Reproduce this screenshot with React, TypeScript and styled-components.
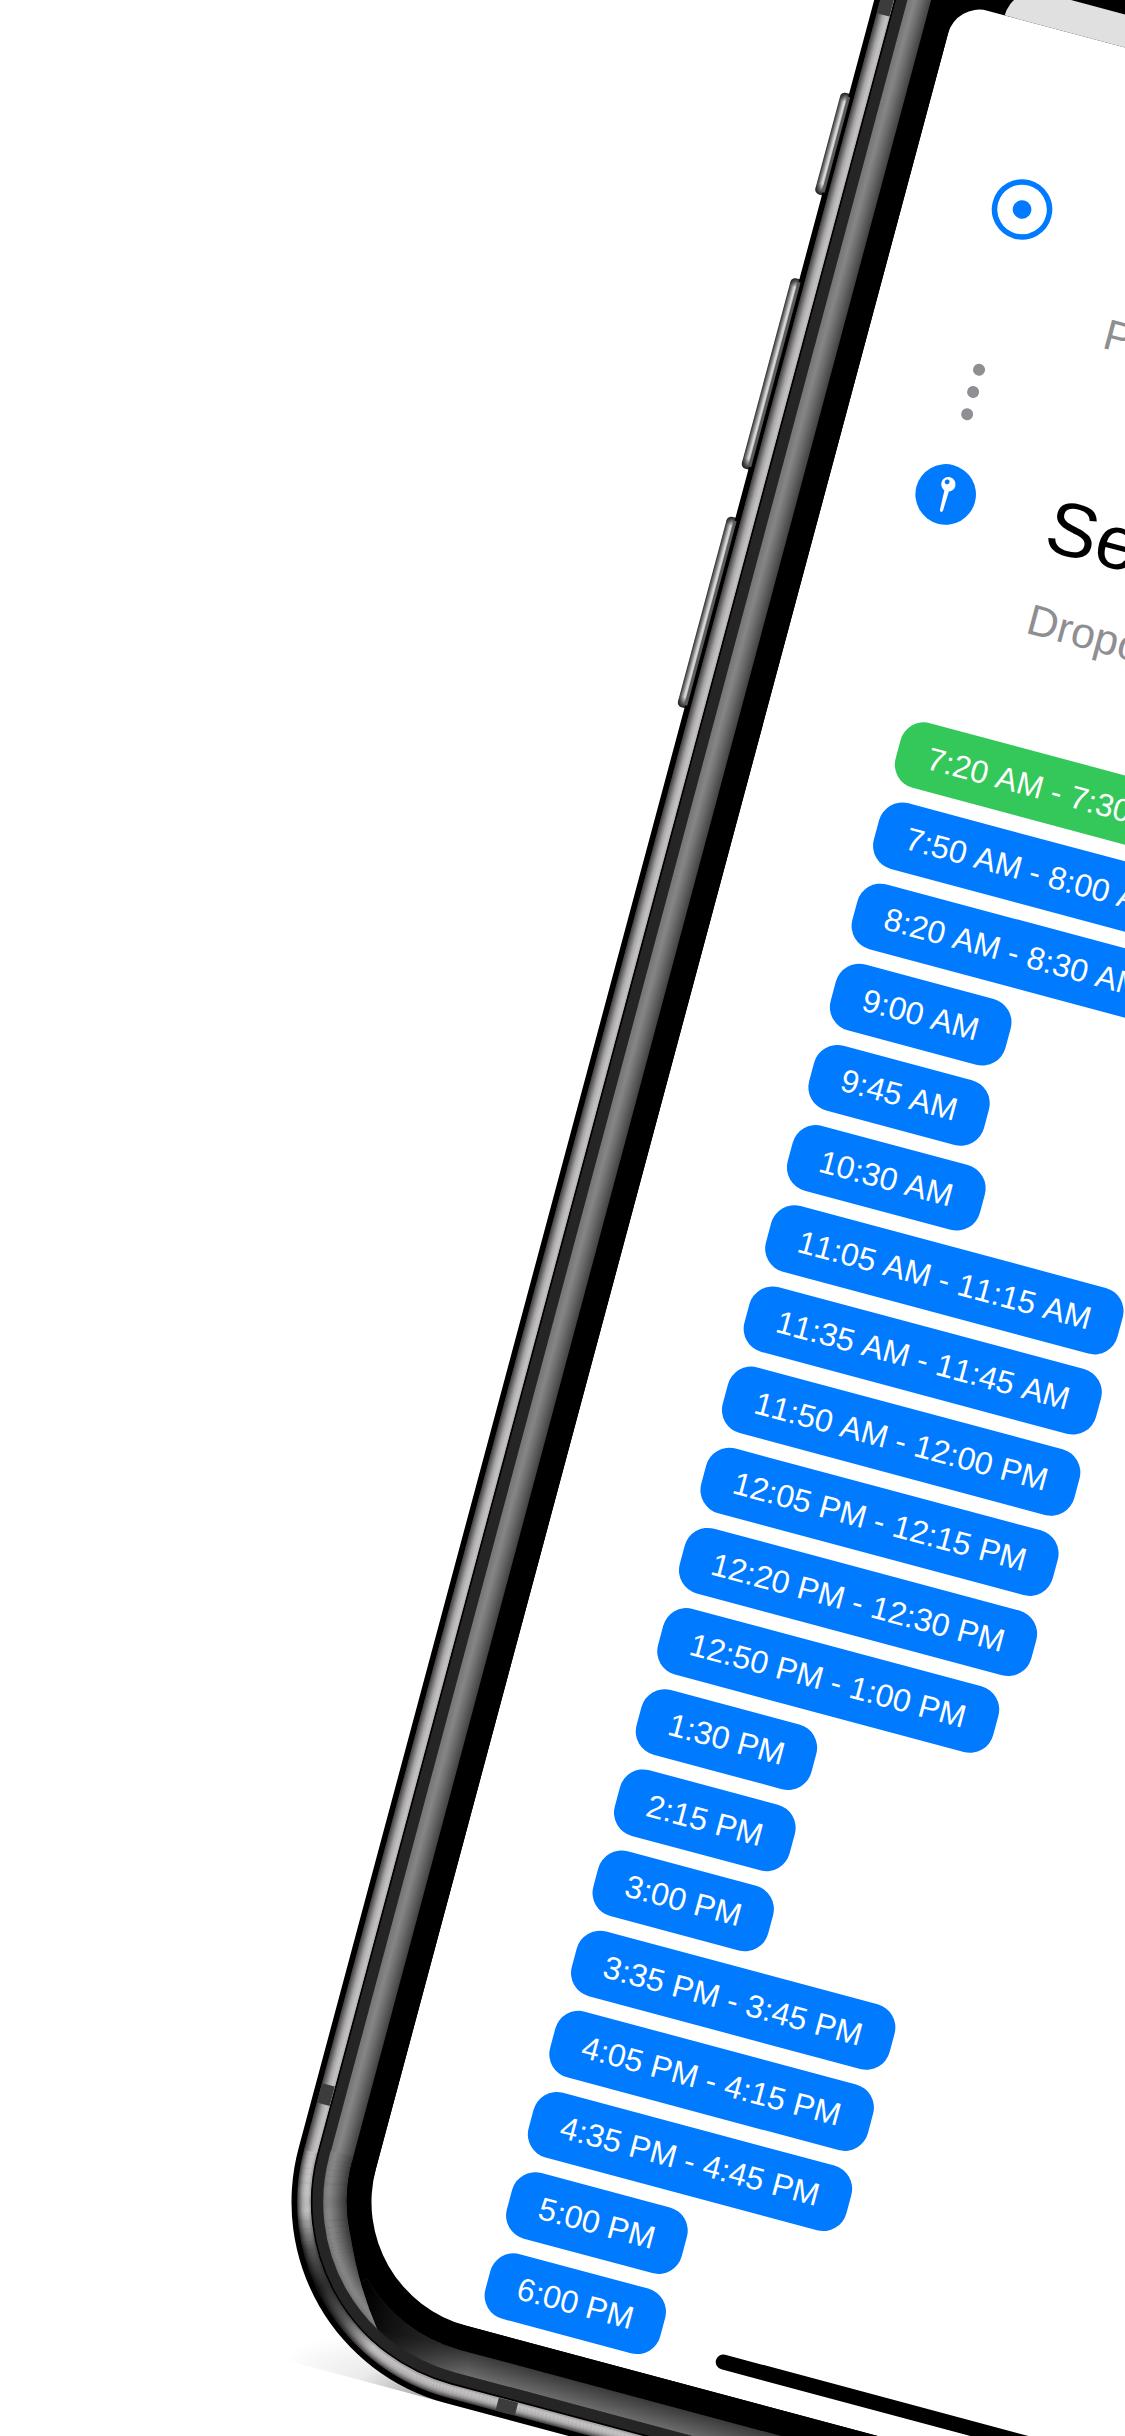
import React from "react";
import styled, { createGlobalStyle } from "styled-components";

const GlobalStyle = createGlobalStyle`
  *, *::before, *::after { box-sizing: border-box; }
  body {
    margin: 0;
    background: #ffffff;
    font-family: "Liberation Sans", Arial, Helvetica, sans-serif;
    font-kerning: none;
  }
`;

const Stage = styled.main`
  height: 100vh;
  overflow: hidden;
  background: #ffffff;
`;

const Device = styled.div`
  position: relative;
  width: 1330px;
  height: 2694px;
  margin: -253px 0 0 942px;
  padding: 80px;
  transform: rotate(15deg);
  transform-origin: top left;
`;

const ShellArt = styled.svg`
  position: absolute;
  inset: 0;
  width: 100%;
  height: 100%;
  overflow: visible;
`;

const Screen = styled.div`
  position: relative;
  display: flex;
  flex-direction: column;
  height: 100%;
  padding-top: 131px;
  border-radius: 128px;
  overflow: hidden;
  background: #000000;
`;

const BackSheet = styled.div`
  height: 32px;
  margin: 0 50px;
  border-radius: 32px 32px 0 0;
  background: #e0e0e0;
`;

const Sheet = styled.section`
  flex: 1;
  display: flex;
  flex-direction: column;
  padding: 141px 86px 16px;
  border-radius: 32px 32px 0 0;
  background: #ffffff;
`;

const Route = styled.div`
  display: grid;
  grid-template-columns: 62px 1fr;
  column-gap: 76px;
  margin-bottom: 101px;
`;

const StopIcon = styled.svg`
  width: 62px;
  height: 62px;
  margin-top: 11px;
`;

const StopText = styled.div`
  display: flex;
  flex-direction: column;
  justify-content: flex-end;
  gap: 26px;
  min-height: 166px;
`;

const StopTitle = styled.h1`
  margin: 0;
  font-size: 76px;
  line-height: 88px;
  font-weight: 400;
  color: #000000;
  white-space: nowrap;
`;

const StopLabel = styled.p`
  margin: 0;
  padding-left: 5px;
  font-size: 43px;
  line-height: 52px;
  color: #8e8e93;
`;

const Connector = styled.div`
  grid-column: 1 / -1;
  display: flex;
  flex-direction: column;
  justify-content: center;
  align-items: center;
  gap: 11px;
  width: 62px;
  height: 129px;
`;

const Dot = styled.span`
  width: 12px;
  height: 12px;
  border-radius: 50%;
  background: #8e8e93;
`;

const Times = styled.div`
  flex: 1;
  display: grid;
  grid-auto-rows: 1fr;
  justify-items: start;
  row-gap: 16px;
  margin-left: 51px;
`;

const TimeButton = styled.button<{ $next?: boolean }>`
  padding: 0 31px;
  border: 0;
  border-radius: 24px;
  background: ${(p) => (p.$next ? "#34c759" : "#007aff")};
  color: #ffffff;
  font-family: inherit;
  font-size: 32px;
  line-height: 40px;
  font-kerning: none;
  white-space: nowrap;
`;

const HomeIndicator = styled.div`
  position: absolute;
  left: 50%;
  bottom: 24px;
  width: 414px;
  height: 15px;
  border-radius: 8px;
  transform: translateX(-50%);
  background: #000000;
`;

const times = [
  "7:20 AM - 7:30 AM",
  "7:50 AM - 8:00 AM",
  "8:20 AM - 8:30 AM",
  "9:00 AM",
  "9:45 AM",
  "10:30 AM",
  "11:05 AM - 11:15 AM",
  "11:35 AM - 11:45 AM",
  "11:50 AM - 12:00 PM",
  "12:05 PM - 12:15 PM",
  "12:20 PM - 12:30 PM",
  "12:50 PM - 1:00 PM",
  "1:30 PM",
  "2:15 PM",
  "3:00 PM",
  "3:35 PM - 3:45 PM",
  "4:05 PM - 4:15 PM",
  "4:35 PM - 4:45 PM",
  "5:00 PM",
  "6:00 PM",
];

const sideKeys = [
  { y: 359, h: 105 },
  { y: 551, h: 197 },
  { y: 798, h: 197 },
];

// Nested strokes, each laid over the last, from the rim towards the glass.
const steel = ["#4a494a", "#5f5d5f", "#767475", "#8b898a", "#9d9a9c", "#aca9ab", "#b6b3b5", "#bebbbd", "#c2bfc1", "#c4c1c3", "#c4c1c3", "#bfbcbe", "#a9a6a8"];
const bevel = ["#747474", "#7a7a7a", "#7f7f7f", "#838383", "#858585", "#868686", "#858585", "#828282", "#7e7e7e", "#7a7a7a", "#767676", "#727272", "#6d6d6d", "#696969", "#646464", "#5f5f5f", "#5a5a5a", "#565656", "#515151", "#4c4c4c", "#474747", "#424242", "#3d3d3d"];

function Shell() {
  return (
    <ShellArt viewBox="0 0 1330 2694" aria-hidden="true">
      <defs>
        <linearGradient id="key" x1="0" x2="1" y1="0" y2="0">
          <stop offset="0" stopColor="#2c2c2c" />
          <stop offset="0.16" stopColor="#777777" />
          <stop offset="0.38" stopColor="#dedede" />
          <stop offset="0.6" stopColor="#a2a2a2" />
          <stop offset="0.85" stopColor="#6a6a6a" />
          <stop offset="1" stopColor="#222222" />
        </linearGradient>
        <linearGradient id="keyTop" x1="0" x2="0" y1="0" y2="1">
          <stop offset="0" stopColor="#1c1c1c" />
          <stop offset="1" stopColor="#1c1c1c" stopOpacity="0" />
        </linearGradient>
        <linearGradient id="keyEnd" x1="0" x2="0" y1="1" y2="0">
          <stop offset="0" stopColor="#1c1c1c" />
          <stop offset="1" stopColor="#1c1c1c" stopOpacity="0" />
        </linearGradient>
        <linearGradient id="sideSteel" gradientUnits="userSpaceOnUse" x1="6" x2="19" y1="0" y2="0">
          <stop offset="0" stopColor="#454445" />
          <stop offset="0.5" stopColor="#aaa7a9" />
          <stop offset="0.8" stopColor="#c4c1c3" />
          <stop offset="1" stopColor="#b8b5b7" />
        </linearGradient>
        <linearGradient id="sideBevel" gradientUnits="userSpaceOnUse" x1="32" x2="56" y1="0" y2="0">
          <stop offset="0" stopColor="#747474" />
          <stop offset="0.3" stopColor="#868686" />
          <stop offset="0.55" stopColor="#6e6e6e" />
          <stop offset="1" stopColor="#3c3c3c" />
        </linearGradient>
        <linearGradient id="baseBevel" gradientUnits="userSpaceOnUse" x1="0" x2="0" y1="2639" y2="2662">
          <stop offset="0" stopColor="#3a3a3a" />
          <stop offset="1" stopColor="#6c6c6c" />
        </linearGradient>
        <linearGradient id="baseFade" gradientUnits="userSpaceOnUse" x1="100" x2="220" y1="0" y2="0">
          <stop offset="0" stopColor="#000000" />
          <stop offset="1" stopColor="#000000" stopOpacity="0" />
        </linearGradient>
        <radialGradient id="cornerShade" gradientUnits="userSpaceOnUse" cx="56" cy="2616" r="80">
          <stop offset="0" stopColor="#000000" stopOpacity="0.8" />
          <stop offset="0.5" stopColor="#000000" stopOpacity="0.55" />
          <stop offset="1" stopColor="#000000" stopOpacity="0" />
        </radialGradient>
        <radialGradient id="ground" cx="0.5" cy="1" r="1" gradientTransform="translate(0.25 0) scale(0.5 1)">
          <stop offset="0" stopColor="#000000" stopOpacity="0.4" />
          <stop offset="0.5" stopColor="#000000" stopOpacity="0.08" />
          <stop offset="1" stopColor="#000000" stopOpacity="0" />
        </radialGradient>
        <clipPath id="taper">
          <path d="M30 2480 V2486 A178 178 0 0 0 124 2642 Q92 2602 72 2555 A153 153 0 0 1 55 2486 V2480 Z" />
        </clipPath>
      </defs>

      <rect x="40" y="2644" width="320" height="50" fill="url(#ground)" />

      {sideKeys.map((k) => (
        <g key={k.y}>
          <rect x="-8" y={k.y} width="14" height={k.h} rx="5" fill="url(#key)" />
          <rect x="-8" y={k.y} width="14" height="9" rx="5" fill="url(#keyTop)" />
          <rect x="-8" y={k.y + k.h - 11} width="14" height="11" rx="5" fill="url(#keyEnd)" />
        </g>
      ))}

      <path d="M208 0 H1122 A208 208 0 0 1 1330 208 V2486 A208 208 0 0 1 1122 2694 H208 A208 208 0 0 1 0 2486 V208 A208 208 0 0 1 208 0 Z" fill="#000000" />
      {sideKeys.map((k) => (
        <rect key={k.y} x="-1" y={k.y + 3} width="3" height={k.h - 6} fill="#5c5c5c" />
      ))}

      <g fill="none" strokeWidth="1.6">
        {steel.map((c, i) => (
          <rect key={i} x={6.5 + i} y={6.5 + i} width={1317 - 2 * i} height={2681 - 2 * i} rx={201.5 - i} stroke={c} />
        ))}
        <rect x="12.5" y="12.5" width="1305" height="2669" rx="195.5" stroke="url(#cornerShade)" strokeWidth="14" />
      </g>
      <rect x="6" y="208" width="13" height="2278" fill="url(#sideSteel)" />

      <g fill="#3c3c3c">
        <rect x="6" y="254" width="13" height="20" />
        <rect x="6" y="2417" width="13" height="20" />
        <rect x="258" y="2675" width="20" height="13" />
      </g>

      <rect x="26.5" y="26.5" width="1277" height="2641" rx="181.5" fill="none" stroke="#252525" strokeWidth="11" />

      <path d="M91.7 2602.3 A164.5 164.5 0 0 0 208 2650.5 L1122 2650.5" fill="none" stroke="url(#baseBevel)" strokeWidth="23" />
      <path d="M91.7 2602.3 A164.5 164.5 0 0 0 208 2650.5 L260 2650.5" fill="none" stroke="url(#baseFade)" strokeWidth="23" />

      <rect x="32" y="208" width="23" height="2278" fill="url(#sideBevel)" />
      <g clipPath="url(#taper)" fill="none" strokeWidth="1.6">
        {bevel.map((c, i) => (
          <rect key={i} x={32.5 + i} y={32.5 + i} width={1265 - 2 * i} height={2629 - 2 * i} rx={175.5 - i} stroke={c} />
        ))}
      </g>
    </ShellArt>
  );
}

function OriginIcon() {
  return (
    <StopIcon viewBox="0 0 62 62" aria-hidden="true">
      <circle cx="31" cy="31" r="27.5" fill="none" stroke="#007aff" strokeWidth="5.5" />
      <circle cx="31" cy="31" r="9.3" fill="#007aff" />
    </StopIcon>
  );
}

function PinIcon() {
  return (
    <StopIcon viewBox="0 0 62 62" aria-hidden="true">
      <circle cx="31" cy="31" r="30.3" fill="#007aff" />
      <path d="M28.7 26 L29.4 47.5 Q31 51 32.6 47.5 L33.3 26 Z" fill="#ffffff" />
      <circle cx="31" cy="20.5" r="7.2" fill="#ffffff" />
      <circle cx="29.2" cy="18.5" r="2.4" fill="#007aff" />
    </StopIcon>
  );
}

export default function App() {
  return (
    <>
      <GlobalStyle />
      <Stage>
        <Device>
          <Shell />
          <Screen>
            <BackSheet />
            <Sheet>
              <Route>
                <OriginIcon />
                <StopText>
                  <StopLabel>Pickup</StopLabel>
                </StopText>
                <Connector aria-hidden="true">
                  <Dot />
                  <Dot />
                  <Dot />
                </Connector>
                <PinIcon />
                <StopText>
                  <StopTitle>Select</StopTitle>
                  <StopLabel>Dropoff</StopLabel>
                </StopText>
              </Route>
              <Times>
                {times.map((t, i) => (
                  <TimeButton key={t} type="button" $next={i === 0}>
                    {t}
                  </TimeButton>
                ))}
              </Times>
            </Sheet>
            <HomeIndicator />
          </Screen>
        </Device>
      </Stage>
    </>
  );
}
